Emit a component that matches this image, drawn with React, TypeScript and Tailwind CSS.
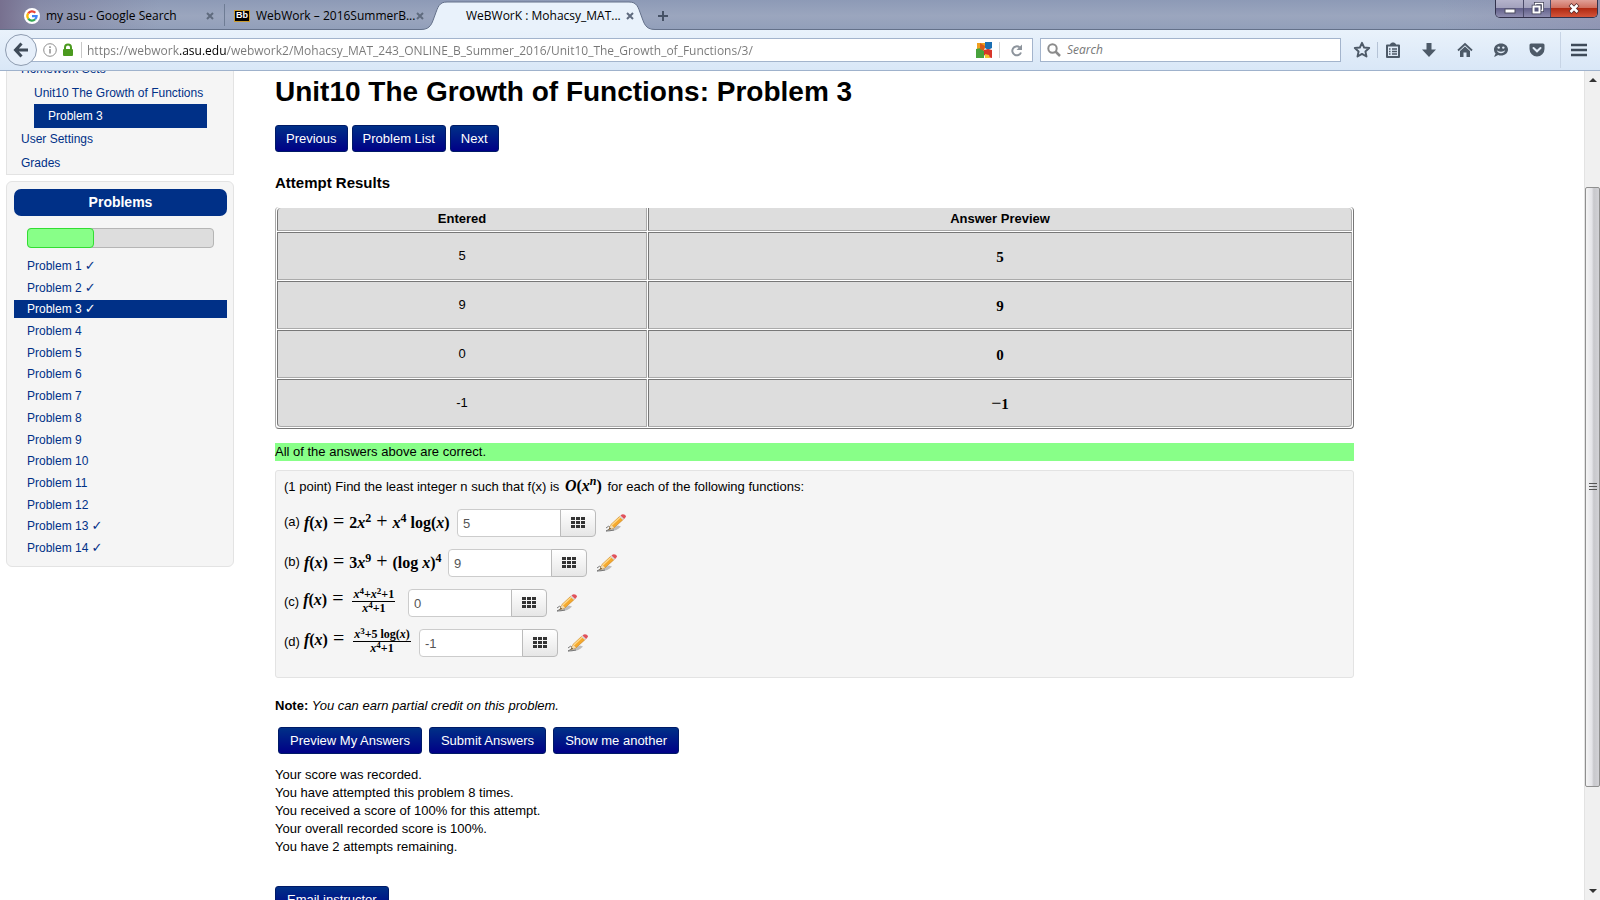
import type { ReactNode } from "react";

const problems = Array.from({ length: 14 }, (_, i) => ({
  id: i + 1,
  done: [1, 2, 3, 13, 14].includes(i + 1),
}));

const results = [
  { entered: "5", sign: "", preview: "5" },
  { entered: "9", sign: "", preview: "9" },
  { entered: "0", sign: "", preview: "0" },
  { entered: "-1", sign: "−", preview: "1" },
];

const messages = [
  "Your score was recorded.",
  "You have attempted this problem 8 times.",
  "You received a score of 100% for this attempt.",
  "Your overall recorded score is 100%.",
  "You have 2 attempts remaining.",
];

function GoogleIcon() {
  return (
    <svg width="16" height="16" viewBox="0 0 16 16" className="shrink-0">
      <circle cx="8" cy="8" r="8" fill="#fff" />
      <g fill="none" strokeWidth="2.2">
        <path d="M4.2 5.4A4.6 4.6 0 0 1 11.3 4.8" stroke="#ea4335" />
        <path d="M4.2 10.6A4.6 4.6 0 0 1 4.2 5.4" stroke="#fbbc05" />
        <path d="M11.2 11.3A4.6 4.6 0 0 1 4.2 10.6" stroke="#34a853" />
        <path d="M8 8.2H12.6A4.6 4.6 0 0 1 11.2 11.3" stroke="#4285f4" />
      </g>
    </svg>
  );
}

function CloseGlyph() {
  return (
    <svg width="8" height="8" viewBox="0 0 8 8">
      <path d="M1 1l6 6M7 1l-6 6" stroke="#5f6b7e" strokeWidth="2" />
    </svg>
  );
}

function Tab({ icon, title, divider }: { icon: ReactNode; title: string; divider?: boolean }) {
  return (
    <div className={`flex h-full w-[210px] items-center gap-[6px] pt-[2px] pl-[9px] ${divider ? "bg-[linear-gradient(#6e7c94,#6e7c94)] bg-[length:1px_22px] bg-right bg-no-repeat" : ""}`}>
      {icon}
      <span className="min-w-0 flex-1 whitespace-nowrap">{title}</span>
      <button aria-label={`Close ${title}`} className="mr-[11px]">
        <CloseGlyph />
      </button>
    </div>
  );
}

function WindowButtons() {
  return (
    <div className="mr-[2px] flex h-[18px] self-start overflow-hidden rounded-b-[5px] border border-t-0 border-[#32324c]">
      <button aria-label="Minimize" className="flex w-[28px] items-center justify-center border-r border-[#4b4b69] bg-[linear-gradient(#b4b3cb_0%,#a3a2bd_45%,#62608a_50%,#8f8db0_100%)] pt-1">
        <svg width="12" height="6" viewBox="0 0 12 6"><rect x="1" y="1" width="10" height="4" fill="#fff" stroke="#4c4c60" strokeWidth="1" /></svg>
      </button>
      <button aria-label="Restore" className="flex w-[27px] items-center justify-center border-r border-[#4b4b69] bg-[linear-gradient(#b4b3cb_0%,#a3a2bd_45%,#62608a_50%,#8f8db0_100%)]">
        <svg width="13" height="13" viewBox="0 0 13 13">
          <path d="M4.500 3V1.500h7v7H10" fill="none" stroke="#3f3f55" strokeWidth="3" />
          <path d="M4.500 3V1.500h7v7H10" fill="none" stroke="#fff" strokeWidth="1.500" />
          <rect x="2.500" y="4.500" width="6" height="6" fill="none" stroke="#3f3f55" strokeWidth="3.500" />
          <rect x="2.500" y="4.500" width="6" height="6" fill="#55557a" stroke="#fff" strokeWidth="2" />
        </svg>
      </button>
      <button aria-label="Close window" className="flex w-[46px] items-center justify-center bg-[linear-gradient(#e0a097_0%,#d0705f_45%,#b02a12_50%,#d4543a_100%)]">
        <svg width="12" height="11" viewBox="0 0 12 11">
          <path d="M2 1.500l8 8M10 1.500l-8 8" stroke="#5a2d2d" strokeWidth="4" />
          <path d="M2.500 2l7 7M9.500 2l-7 7" stroke="#fff" strokeWidth="2.500" />
        </svg>
      </button>
    </div>
  );
}

function TabStrip() {
  return (
    <header className="flex h-[30px] shrink-0 items-center border-b border-[#64718a] bg-[linear-gradient(90deg,#77708f_0px,#77708f66_40px,transparent_160px,transparent_90%,#8a86a966_100%),linear-gradient(#8d9ab6,#9ba6be_55%,#929fba)] pl-[15px] text-[12px] text-black">
      <Tab icon={<GoogleIcon />} title="my asu - Google Search" divider />
      <Tab
        icon={<span className="flex h-[12px] w-4 shrink-0 items-center justify-center border border-[#c99a2e] bg-black font-['Liberation_Sans'] text-[9px] font-bold text-white">Bb</span>}
        title="WebWork – 2016SummerB..."
      />
      <div className="relative flex h-full w-[214px] items-center pt-[2px] pl-[31px]">
        <svg className="absolute top-[1px] -left-[14px] h-[30px] w-[238px]" viewBox="0 0 238 30" preserveAspectRatio="none">
          <path d="M0 30V28.500C10 28.500 11 22 14 14S18 1 26 1H208C216 1 217 6 220 14S224 28.500 234 28.500H238V30Z" fill="#e9f2fb" />
          <path d="M0 28.500C10 28.500 11 22 14 14S18 1 26 1H208C216 1 217 6 220 14S224 28.500 234 28.500H238" fill="none" stroke="#64718a" />
        </svg>
        <span className="relative flex-1 whitespace-nowrap">WeBWorK : Mohacsy_MAT...</span>
        <button aria-label="Close current tab" className="relative mr-[15px]"><CloseGlyph /></button>
      </div>
      <button aria-label="New tab" className="relative ml-[4px] p-1 pt-[7px]">
        <svg width="12" height="12" viewBox="0 0 12 12"><path d="M6 1v10M1 6h10" stroke="#465266" strokeWidth="2" /></svg>
      </button>
      <div className="flex-1" />
      <WindowButtons />
    </header>
  );
}

const ink = "#4d5a68";

function ToolButton({ label, children }: { label: string; children: ReactNode }) {
  return (
    <button aria-label={label} className="flex h-6 w-9 items-center justify-center">
      {children}
    </button>
  );
}

function Toolbar() {
  return (
    <nav className="flex h-[41px] shrink-0 items-center border-b border-[#9fb2cc] bg-[linear-gradient(#e9f2fb,#d9e7f7)] pl-[5px] text-[12px]">
      <button aria-label="Back" className="z-10 flex size-8 shrink-0 items-center justify-center rounded-full border border-[#8e9cb0] bg-[#e6effa]">
        <svg width="16" height="16" viewBox="0 0 16 16"><path d="M8.500 1.500L2.500 8l6 6.500M3 8h12" fill="none" stroke="#3f4b59" strokeWidth="3" /></svg>
      </button>
      <div className="-ml-[6px] flex h-6 flex-1 items-center border border-[#a3b4cc] bg-white pl-[7px]">
        <svg width="14" height="14" viewBox="0 0 14 14" className="ml-1 shrink-0">
          <circle cx="7" cy="7" r="6.300" fill="none" stroke="#8f8f8f" />
          <path d="M7 6v4.500M7 3.300v1.600" stroke="#8f8f8f" strokeWidth="1.500" />
        </svg>
        <svg width="12" height="14" viewBox="0 0 12 14" className="ml-[5px] shrink-0">
          <path d="M3 7V4.500a3 3 0 0 1 6 0V7" fill="none" stroke="#4b9a1f" strokeWidth="2" />
          <rect x="1" y="6" width="10" height="7" rx="1" fill="#4b9a1f" />
        </svg>
        <div className="ml-[7px] h-4 w-px shrink-0 bg-[#c8c8c8]" />
        <input
          aria-label="Address"
          defaultValue="https://webwork.asu.edu/webwork2/Mohacsy_MAT_243_ONLINE_B_Summer_2016/Unit10_The_Growth_of_Functions/3/"
          className="ml-[5px] h-5 min-w-0 flex-1 bg-[linear-gradient(90deg,#777_93px,#000_93px,#000_139px,#777_139px)] bg-clip-text text-transparent outline-none"
        />
        <svg width="16" height="16" viewBox="0 0 16 16" className="shrink-0">
          <path d="M1 1h8v5L6 9H1z" fill="#f0a020" />
          <path d="M9 0h7v6l-4 2-3-2z" fill="#1b6fb3" />
          <path d="M0 7l5-1 3 3v7H0z" fill="#48a23c" />
          <path d="M8 8l4-1 4 1v8l-5-1-3-2z" fill="#d8362a" />
          <path d="M4 1l5 3-1 5-4-2z" fill="#d85a1a" />
          <path d="M9 12l4 1 1 3H9z" fill="#f3c431" />
        </svg>
        <div className="ml-[7px] h-4 w-px bg-[#d4d4d4]" />
        <button aria-label="Reload" className="mr-[9px] ml-[10px]">
          <svg width="13" height="13" viewBox="0 0 13 13">
            <path d="M9.500 3.200A4.500 4.500 0 1 0 11 8.500" fill="none" stroke="#8d949c" strokeWidth="2" />
            <path d="M12 .5v5.500H6.500z" fill="#8d949c" />
          </svg>
        </button>
      </div>
      <label className="ml-[7px] flex h-6 w-[301px] items-center gap-[6px] border border-[#a3b4cc] bg-white pl-[6px]">
        <svg width="14" height="14" viewBox="0 0 14 14" className="shrink-0">
          <circle cx="5.500" cy="5.500" r="4.200" fill="none" stroke="#8b8b8b" strokeWidth="2" />
          <path d="M8.500 8.500l4.500 4.500" stroke="#8b8b8b" strokeWidth="2.500" />
        </svg>
        <input aria-label="Search" placeholder="Search" className="min-w-0 flex-1 italic outline-none placeholder:text-[#777]" />
      </label>
      <div className="ml-[3px] flex items-center">
        <ToolButton label="Bookmark this page">
          <svg width="18" height="18" viewBox="0 0 18 18"><path d="M9 1.800l2.100 4.700 5.100.5-3.800 3.500 1.100 5L9 12.900l-4.500 2.600 1.100-5L1.800 7l5.100-.5z" fill="none" stroke={ink} strokeWidth="1.900" strokeLinejoin="round" /></svg>
        </ToolButton>
        <div className="-mr-[3px] -ml-[3px] h-4 w-px bg-[#b5c3d6]" />
        <ToolButton label="Bookmarks">
          <svg width="16" height="16" viewBox="0 0 16 16">
            <path d="M2 3.500h12V15H2z" fill="none" stroke={ink} strokeWidth="2" strokeLinejoin="round" />
            <path d="M5 4V2l2-1.500h2L11 2v2z" fill={ink} />
            <path d="M4 7h1.500M7 7h5M4 9.500h1.500M7 9.500h5M4 12h1.500M7 12h5" stroke={ink} strokeWidth="1.300" />
          </svg>
        </ToolButton>
        <ToolButton label="Downloads">
          <svg width="16" height="16" viewBox="0 0 16 16"><path d="M5.500 1h5v6.500H15L8 15 1 7.500h4.500z" fill={ink} /></svg>
        </ToolButton>
        <ToolButton label="Home">
          <svg width="16" height="16" viewBox="0 0 16 16">
            <path d="M1 8.500L8 2l7 6.500" fill="none" stroke={ink} strokeWidth="1.800" />
            <path d="M3 9l5-4.600L13 9v6H9.500v-4.500h-3V15H3z" fill={ink} />
          </svg>
        </ToolButton>
        <ToolButton label="Chat">
          <svg width="16" height="16" viewBox="0 0 16 16">
            <path d="M8 1.500c4 0 7 2.600 7 6s-3 6-7 6c-1 0-2-.1-2.800-.5L1 15l1.600-3.500C1.600 10.500 1 9 1 7.500c0-3.400 3-6 7-6z" fill={ink} />
            <path d="M3.800 8c1 4.400 7.400 4.400 8.400 0-1.500 2.200-6.900 2.200-8.400 0z" fill="#e2edf9" />
            <circle cx="5.700" cy="5.600" r="1.200" fill="#e2edf9" />
            <circle cx="10.300" cy="5.600" r="1.200" fill="#e2edf9" />
          </svg>
        </ToolButton>
        <ToolButton label="Pocket">
          <svg width="16" height="16" viewBox="0 0 16 16">
            <path d="M2 1.500h12a1.500 1.500 0 0 1 1.500 1.500v4a7.500 7.500 0 0 1-15 0V3A1.500 1.500 0 0 1 2 1.500z" fill={ink} />
            <path d="M4.500 6L8 9.300 11.500 6" fill="none" stroke="#e2edf9" strokeWidth="2" strokeLinecap="round" />
          </svg>
        </ToolButton>
        <div className="ml-[5px] h-9 w-px bg-[#c7d4e5]" />
        <ToolButton label="Menu">
          <svg width="16" height="14" viewBox="0 0 16 14"><path d="M0 2h16M0 7h16M0 12h16" stroke="#3f4b59" strokeWidth="2.500" /></svg>
        </ToolButton>
        <div className="w-[3px]" />
      </div>
    </nav>
  );
}

function Sidebar() {
  return (
    <aside className="w-[228px] shrink-0 text-[12px] leading-[18px] text-[#003087]">
      <nav className="h-[104px] overflow-hidden border border-t-0 border-[#e3e3e3] bg-[#f5f5f5] pl-[14px]">
        <a href="#sets" className="-mt-[11px] block">Homework Sets</a>
        <a href="#unit10" className="mt-[6px] ml-[13px] block">Unit10 The Growth of Functions</a>
        <a href="#p3" className="mt-[2px] mr-[26px] ml-[13px] block bg-[#003087] py-[3px] pl-[14px] text-white">Problem 3</a>
        <a href="#settings" className="mt-[2px] block">User Settings</a>
        <a href="#grades" className="mt-[6px] block">Grades</a>
      </nav>
      <section className="mt-[6px] rounded-[6px] border border-[#e3e3e3] bg-[#f5f5f5] pt-[7px] pr-[6px] pb-[9px] pl-[7px]">
        <h2 className="rounded-[7px] bg-[#003087] py-[4px] text-center text-[14px] leading-[19px] font-bold text-white">Problems</h2>
        <div className="mx-[13px] mt-3 h-5 rounded-[4px] border border-[#b5b5b5] bg-[#ddd]">
          <div className="-m-px h-5 w-[67px] rounded-[4px] border border-[#33dd33] bg-[#88ff88]" />
        </div>
        <ul className="mt-[9px] flex min-h-[300px] flex-col justify-between">
          {problems.map((p) => (
            <li key={p.id} className={p.id === 3 ? "bg-[#003087] text-white" : ""}>
              <a href={`#problem-${p.id}`} className="block pl-[13px]">
                Problem {p.id}
                {p.done && <span className="pl-[3px] font-['DejaVu_Sans'] text-[13px] leading-none">✓</span>}
              </a>
            </li>
          ))}
        </ul>
      </section>
    </aside>
  );
}

function NavyButton({ compact, children }: { compact?: boolean; children: ReactNode }) {
  return (
    <button className={`h-[27px] rounded-[3px] border border-[#001a66] bg-[linear-gradient(#003087,#000087)] text-[13px] leading-[18px] text-white ${compact ? "px-[10px]" : "px-[11px]"}`}>
      {children}
    </button>
  );
}

const headCell = "border border-t-0 border-r-[#aaa] border-b-[#aaa] border-l-[#777] bg-[#ddd] pt-[2px] pb-[2px] leading-[18px]";
const bodyCell = "h-[48px] border border-t-[#777] border-r-[#aaa] border-b-[#aaa] border-l-[#777] bg-[#ddd]";

function ResultsTable() {
  return (
    <table className="mt-[14px] w-full border-separate border-spacing-px rounded-[4px] border border-t-0 border-r-[#777] border-b-[#777] border-l-[#aaa] text-center">
      <thead>
        <tr>
          <th className={`w-[370px] rounded-tl-[4px] ${headCell}`}>Entered</th>
          <th className={`rounded-tr-[4px] ${headCell}`}>Answer Preview</th>
        </tr>
      </thead>
      <tbody>
        {results.map((r, i) => (
          <tr key={r.entered}>
            <td className={`${bodyCell} ${i === 3 ? "rounded-bl-[4px]" : ""}`}>{r.entered}</td>
            <td className={`font-['Liberation_Serif'] text-[15px] font-bold ${bodyCell} ${i === 3 ? "rounded-br-[4px]" : ""}`}>
              <span className="text-[18px] leading-none font-normal">{r.sign}</span>
              {r.preview}
            </td>
          </tr>
        ))}
      </tbody>
    </table>
  );
}

function Sup({ children }: { children: ReactNode }) {
  return <sup className="-top-[6px] text-[12px] leading-none">{children}</sup>;
}
function SmallSup({ children }: { children: ReactNode }) {
  return <sup className="-top-[4px] text-[9px] leading-none">{children}</sup>;
}
function Op({ children }: { children: ReactNode }) {
  return <span className="mx-[5px] text-[20px] leading-none font-normal">{children}</span>;
}
function Frac({ top, bottom }: { top: ReactNode; bottom: ReactNode }) {
  return (
    <span className="ml-1 inline-flex flex-col text-center align-middle text-[12px] leading-[13px]">
      <span className="border-b border-black px-px">{top}</span>
      <span>{bottom}</span>
    </span>
  );
}
function Fx() {
  return (
    <>
      <i>f</i>(<i>x</i>)<Op>=</Op>
    </>
  );
}

function Pencil() {
  return (
    <svg width="22" height="20" viewBox="0 0 22 20">
      <path d="M2 17.500q8 2 14-4l-3-1z" fill="#bcbcbc" />
      <path d="M1 15q3-3 4-1t-4 4q4 0 8-1" fill="none" stroke="#777" />
      <path d="M4 16.500L6 11.500 15 3l3.500 3.200L9 14.800z" fill="#f6a92c" stroke="#c98524" strokeWidth=".7" />
      <path d="M6.800 12L15.600 3.700" stroke="#ffd98a" strokeWidth="1.300" />
      <path d="M4 16.500L6 11.500l3 3.300z" fill="#f3dcb2" />
      <path d="M4 16.500l.8-2 1.200 1.200z" fill="#333" />
      <path d="M14.200 3.800L15.500 2.600l3.700 3.300L18 7z" fill="#d8d8d8" />
      <path d="M15.500 2.600Q17.500.300 19.800 1.800T19.200 5.900z" fill="#e0525c" />
    </svg>
  );
}

function AnswerRow({ id, value, width, children }: { id: string; value: string; width: string; children: ReactNode }) {
  return (
    <div className="flex h-[40px] items-center">
      <label htmlFor={`answer-${id}`} className={`flex items-center gap-1 pb-[3px] whitespace-nowrap ${width}`}>
        <span>({id})</span>
        <span className="font-['Liberation_Serif'] text-[16px] leading-[20px] font-bold">{children}</span>
      </label>
      <input
        id={`answer-${id}`}
        defaultValue={value}
        className="h-7 w-[104px] rounded-l-[4px] border border-[#ccc] bg-white px-[5px] text-[#555] outline-none"
      />
      <button aria-label={`Open equation editor for ${id}`} className="-ml-px flex h-7 w-9 items-center justify-center rounded-r-[4px] border border-[#bbb] bg-[linear-gradient(#fff,#e6e6e6)]">
        <svg width="14" height="12" viewBox="0 0 14 12" fill="#333">
          {[0, 5, 10].map((x) => [0, 4, 8].map((y) => <rect key={`${x}-${y}`} x={x} y={y} width="4" height="3" />))}
        </svg>
      </button>
      <button aria-label={`Draw answer ${id}`} className="ml-[9px]">
        <Pencil />
      </button>
    </div>
  );
}

function ScrollBar() {
  return (
    <div aria-hidden="true" className="flex w-4 shrink-0 flex-col items-center border-l border-[#e3e3e3] bg-[#f0f0f0] py-[6px]">
      <svg width="8" height="5" viewBox="0 0 8 5" className="shrink-0"><path d="M0 5l4-4 4 4z" fill="#333" /></svg>
      <div className="grow-[105] basis-0" />
      <div className="flex w-full grow-[600] basis-0 items-center justify-center rounded-[2px] border border-[#8f8f8f] bg-[linear-gradient(90deg,#f4f4f4,#e4e4e8_45%,#c8c8cc_60%,#d2d2d6)]">
        <svg width="8" height="9" viewBox="0 0 8 9"><path d="M0 1.500h8M0 4.500h8M0 7.500h8" stroke="#555" /></svg>
      </div>
      <div className="grow-[102] basis-0" />
      <svg width="8" height="5" viewBox="0 0 8 5" className="shrink-0"><path d="M0 0l4 4 4-4z" fill="#333" /></svg>
    </div>
  );
}

export default function App() {
  return (
    <div className="flex h-screen flex-col overflow-hidden bg-white font-['Open_Sans',sans-serif]">
      <TabStrip />
      <Toolbar />
      <div className="flex min-h-0 flex-1">
        <div className="flex min-w-0 flex-1 overflow-hidden pl-[6px] font-['Liberation_Sans',Arial,sans-serif] text-[13px] leading-[18px] text-black">
          <Sidebar />
          <main className="mr-[230px] ml-[41px] min-w-0 flex-1">
            <h1 className="pt-px text-[28px] leading-[40px] font-bold">Unit10 The Growth of Functions: Problem 3</h1>
            <div className="mt-[13px] flex gap-1">
              <NavyButton compact>Previous</NavyButton>
              <NavyButton compact>Problem List</NavyButton>
              <NavyButton compact>Next</NavyButton>
            </div>
            <h2 className="mt-[21px] text-[15px] leading-[20px] font-bold">Attempt Results</h2>
            <ResultsTable />
            <p className="mt-[14px] bg-[#88ff88]">All of the answers above are correct.</p>
            <section className="mt-[9px] rounded-[3px] border border-[#e3e3e3] bg-[#f5f5f5] px-2 pt-[7px] pb-[14px]">
              <p className="mb-[7px]">
                (1 point) Find the least integer n such that f(x) is{" "}
                <span className="mx-[2px] font-['Liberation_Serif'] text-[16px] leading-none font-bold">
                  <i>O</i>(<i>x</i>
                  <Sup><i>n</i></Sup>)
                </span>{" "}
                for each of the following functions:
              </p>
              <AnswerRow id="a" value="5" width="w-[173px]">
                <Fx />2<i>x</i><Sup>2</Sup><Op>+</Op><i>x</i><Sup>4</Sup> log(<i>x</i>)
              </AnswerRow>
              <AnswerRow id="b" value="9" width="w-[164px]">
                <Fx />3<i>x</i><Sup>9</Sup><Op>+</Op>(log <i>x</i>)<Sup>4</Sup>
              </AnswerRow>
              <AnswerRow id="c" value="0" width="w-[124px]">
                <Fx />
                <Frac
                  top={<><i>x</i><SmallSup>4</SmallSup>+<i>x</i><SmallSup>2</SmallSup>+1</>}
                  bottom={<><i>x</i><SmallSup>4</SmallSup>+1</>}
                />
              </AnswerRow>
              <AnswerRow id="d" value="-1" width="w-[135px]">
                <Fx />
                <Frac
                  top={<><i>x</i><SmallSup>3</SmallSup>+5 log(<i>x</i>)</>}
                  bottom={<><i>x</i><SmallSup>4</SmallSup>+1</>}
                />
              </AnswerRow>
            </section>
            <p className="mt-[19px]">
              <b>Note:</b> <i>You can earn partial credit on this problem.</i>
            </p>
            <div className="mt-3 ml-[3px] flex gap-[7px]">
              <NavyButton>Preview My Answers</NavyButton>
              <NavyButton>Submit Answers</NavyButton>
              <NavyButton>Show me another</NavyButton>
            </div>
            <div className="mt-3 mb-[30px]">
              {messages.map((m) => (
                <p key={m}>{m}</p>
              ))}
            </div>
            <NavyButton>Email instructor</NavyButton>
          </main>
        </div>
        <ScrollBar />
      </div>
    </div>
  );
}
